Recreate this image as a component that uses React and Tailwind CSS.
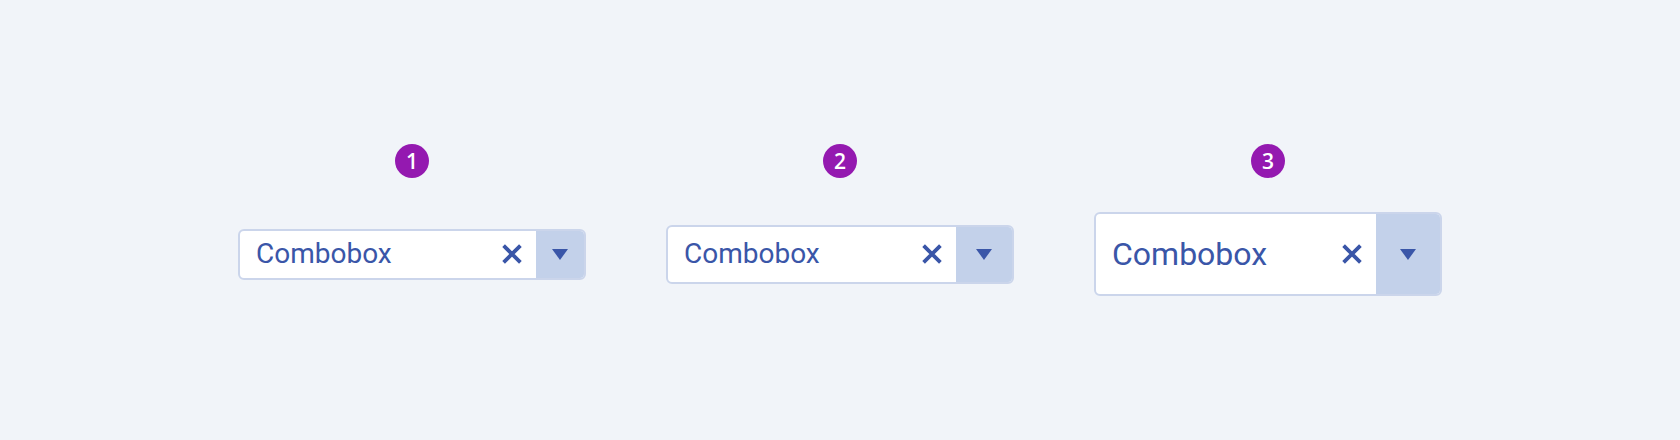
import React from "react";

const ClearIcon = () => (
  <svg width="20" height="20" viewBox="0 0 20 20" fill="none">
    <path d="M1.6 1.6L18.4 18.4M18.4 1.6L1.6 18.4" stroke="#3a56a8" strokeWidth="3.8" />
  </svg>
);

const CaretIcon = () => (
  <svg width="16" height="11" viewBox="0 0 16 11">
    <path d="M0 0H16L8 11Z" fill="#3a56a8" />
  </svg>
);

const Combobox = ({ heightClass, textClass, buttonClass }) => (
  <div className={`flex w-[348px] ${heightClass} items-stretch overflow-hidden rounded-md border-2 border-[#cbd5eb] bg-white`}>
    <div className={`flex flex-1 items-center pl-4 text-[#3a56a8] ${textClass}`} style={{ fontFamily: "Roboto, sans-serif" }}>
      Combobox
    </div>
    <button className="flex items-center pr-[14px]">
      <ClearIcon />
    </button>
    <button className={`flex items-center justify-center bg-[#c3d1ea] ${buttonClass}`}>
      <CaretIcon />
    </button>
  </div>
);

const variants = [
  { num: 1, heightClass: "h-[51px]", textClass: "text-[28px]", buttonClass: "w-[48px]" },
  { num: 2, heightClass: "h-[59px]", textClass: "text-[28px]", buttonClass: "w-[56px]" },
  { num: 3, heightClass: "h-[84px]", textClass: "text-[32px]", buttonClass: "w-[64px]" },
];

const App = () => {
  return (
    <div className="flex h-[440px] w-full items-center justify-center bg-[#f1f4f9]">
      <div className="flex gap-[80px]">
        {variants.map((v) => (
          <div key={v.num} className="flex w-[348px] flex-col items-center gap-[34px]">
            <div
              className="flex h-[34px] w-[34px] items-center justify-center rounded-full bg-[#9419b0] text-[21px] font-semibold leading-none text-white"
              style={{ fontFamily: "'Open Sans', sans-serif" }}
            >
              {v.num}
            </div>
            <div className="flex h-[84px] items-center">
              <Combobox heightClass={v.heightClass} textClass={v.textClass} buttonClass={v.buttonClass} />
            </div>
          </div>
        ))}
      </div>
    </div>
  );
};

export default App;
